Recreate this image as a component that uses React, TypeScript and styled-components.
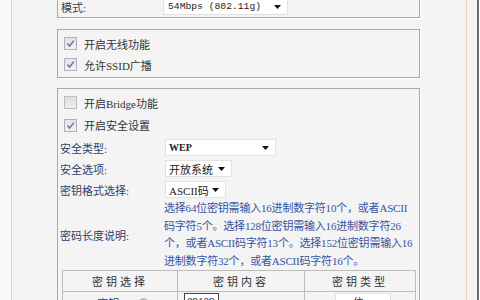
import { createGlobalStyle, styled } from 'styled-components';

const GlobalStyle = createGlobalStyle`
  html, body {
    margin: 0;
    padding: 0;
    background: #ffffff;
  }

  body {
    overflow: hidden;

    font-family: "Liberation Serif", "Noto Sans CJK SC", serif;
    font-size: 11px;
    color: #333333;
  }
`;

const DESC_LINES = [
  '选择64位密钥需输入16进制数字符10个，或者ASCII',
  '码字符5个。选择128位密钥需输入16进制数字符26',
  '个，或者ASCII码字符13个。选择152位密钥需输入16',
  '进制数字符32个，或者ASCII码字符16个。',
];

const Arrow = () => (
  <svg width="7" height="4" viewBox="0 0 7 4">
    <path d="M0 0 H7 L3.5 4 Z" fill="#111" />
  </svg>
);

const Select = ({ value, width, kind }: { value: string; width: number; kind?: 'mono' | 'bold' }) => (
  <S.Select $width={width} $kind={kind}>
    <span>{value}</span>
    <Arrow />
  </S.Select>
);

const Check = ({ checked, label }: { checked: boolean; label: string }) => (
  <S.CheckRow>
    <S.CheckBox $checked={checked}>
      {checked && (
        <svg width="11" height="11" viewBox="0 0 11 11">
          <path d="M2.4 5.6 L4.6 8 L8.8 2.6" fill="none" stroke="#6b7896" strokeWidth="1.5" />
        </svg>
      )}
    </S.CheckBox>
    <span>{label}</span>
  </S.CheckRow>
);

const WirelessSettings = () => {
  return (
    <S.Frame>
      <GlobalStyle />
      <S.Shell>
        <S.Panel>
          <S.Content>
            <S.Group $pad="9px 0 2px 3px">
              <S.Row $h={17}>
                <S.Label $w={102} $tone="#3b3f55">模式:</S.Label>
                <Select value="54Mbps (802.11g)" width={125} kind="mono" />
              </S.Row>
            </S.Group>

            <S.Group $pad="3px 0 2px 6px" $gap={11}>
              <Check checked label="开启无线功能" />
              <Check checked label="允许SSID广播" />
            </S.Group>

            <S.Group $pad="3px 0 0 2px" $gap={10} $open>
              <S.Indent>
                <Check checked={false} label="开启Bridge功能" />
              </S.Indent>
              <S.Indent $tall>
                <Check checked label="开启安全设置" />
              </S.Indent>
              <S.Row $h={21}>
                <S.Label $w={105}>安全类型:</S.Label>
                <Select value="WEP" width={111} kind="bold" />
              </S.Row>
              <S.Row $h={21}>
                <S.Label $w={105}>安全选项:</S.Label>
                <Select value="开放系统" width={67} />
              </S.Row>
              <S.Row $h={21}>
                <S.Label $w={105}>密钥格式选择:</S.Label>
                <Select value="ASCII码" width={61} />
              </S.Row>
              <S.DescRow>
                <S.Label $w={104}>密码长度说明:</S.Label>
                <S.Desc>
                  {DESC_LINES.map((line) => (
                    <div key={line}>{line}</div>
                  ))}
                </S.Desc>
              </S.DescRow>

              <S.KeyTable>
                <colgroup>
                  <col style={{ width: 115 }} />
                  <col style={{ width: 127 }} />
                  <col style={{ width: 111 }} />
                </colgroup>
                <thead>
                  <tr>
                    <S.Th>密钥选择</S.Th>
                    <S.Th>密钥内容</S.Th>
                    <S.Th>密钥类型</S.Th>
                  </tr>
                </thead>
                <tbody>
                  <tr>
                    <S.Td $align="center">
                      <S.KeyName>
                        密钥 1:
                        <S.Help>?</S.Help>
                      </S.KeyName>
                    </S.Td>
                    <S.Td $align="left">
                      <S.KeyInput>09109</S.KeyInput>
                    </S.Td>
                    <S.Td $align="center">
                      <Select value="64 位" width={56} />
                    </S.Td>
                  </tr>
                </tbody>
              </S.KeyTable>
            </S.Group>
          </S.Content>
        </S.Panel>
      </S.Shell>
    </S.Frame>
  );
};

const S = {
  Frame: styled.div`
    display: flex;
    overflow: hidden;

    width: 480px;
    height: 300px;

    background: #ffffff;
  `,

  Shell: styled.div`
    display: flex;
    box-sizing: border-box;

    width: 479px;
    height: 100%;
    padding: 0 10px 0 11px;
    border-right: 2px solid #6c6c6c;

    background: linear-gradient(to right, #fafafa 11px, #f4f4f4 11px);
  `,

  Panel: styled.div`
    box-sizing: border-box;
    overflow: hidden;

    width: 456px;
    height: 100%;
    border-left: 1px solid #e7d4bb;
    border-right: 1px solid #e7d4bb;

    background: #f4f4f4;
  `,

  Content: styled.div`
    display: flex;
    flex-direction: column;

    margin-top: -12px;
    padding-left: 45px;
  `,

  Group: styled.div<{ $pad: string; $gap?: number; $open?: boolean }>`
    display: flex;
    flex-direction: column;
    box-sizing: border-box;

    width: 363px;
    margin-top: ${({ $gap }) => $gap ?? 0}px;
    padding: ${({ $pad }) => $pad};
    border: 1px solid #a9a9a9;
    border-bottom: ${({ $open }) => ($open ? 'none' : '1px solid #a9a9a9')};

    box-shadow: 1px 1px 0 #ffffff;
  `,

  Row: styled.div<{ $h: number }>`
    display: flex;
    align-items: center;

    height: ${({ $h }) => $h}px;
  `,

  Label: styled.span<{ $w: number; $tone?: string }>`
    flex: none;

    width: ${({ $w }) => $w}px;

    color: ${({ $tone }) => $tone ?? '#2c3f6a'};
    white-space: nowrap;
  `,

  Select: styled.span<{ $width: number; $kind?: 'mono' | 'bold' }>`
    display: inline-flex;
    box-sizing: border-box;
    align-items: center;
    justify-content: space-between;

    width: ${({ $width }) => $width}px;
    height: 17px;
    padding: 0 6px 0 ${({ $kind }) => ($kind === 'mono' ? 4 : 3)}px;
    border: 1px solid #e2e2e2;

    background: #ffffff;
    color: #222222;
    font-family: ${({ $kind }) =>
      $kind === 'mono' ? '"Liberation Mono", monospace' : 'inherit'};
    font-size: ${({ $kind }) => ($kind === 'mono' ? '9.7px' : $kind === 'bold' ? '10px' : '11px')};
    font-weight: ${({ $kind }) => ($kind === 'bold' ? 700 : 400)};
    white-space: nowrap;
  `,

  CheckRow: styled.div`
    display: flex;
    align-items: center;

    height: 21px;

    color: #333333;
  `,

  Indent: styled.div<{ $tall?: boolean }>`
    display: flex;
    align-items: center;

    height: ${({ $tall }) => ($tall ? 24 : 21)}px;
    padding-left: 4px;
  `,

  CheckBox: styled.span<{ $checked: boolean }>`
    display: inline-flex;
    box-sizing: border-box;
    align-items: center;
    justify-content: center;

    width: 13px;
    height: 13px;
    margin-right: 7px;
    border: 1px solid ${({ $checked }) => ($checked ? '#aeb2c0' : '#bdbdbd')};

    background: ${({ $checked }) =>
      $checked ? 'linear-gradient(#e2e3e8, #f0f0f3)' : 'linear-gradient(#e0e0e0, #ededed)'};
  `,

  DescRow: styled.div`
    display: flex;
    align-items: center;

    height: 70px;
  `,

  Desc: styled.div`
    color: #3553a0;
    line-height: 17.5px;
    letter-spacing: -0.2px;
    white-space: nowrap;
  `,

  KeyTable: styled.table`
    width: 353px;
    margin-left: 2px;
    border-collapse: collapse;

    table-layout: fixed;
  `,

  Th: styled.th`
    height: 20px;
    padding: 0;
    border: 1px solid #bcbcbc;

    color: #333333;
    font-weight: 400;
    letter-spacing: 3px;
    text-align: center;
  `,

  Td: styled.td<{ $align: string }>`
    height: 24px;
    padding: 1px 0 0 6px;
    border: 1px solid #bcbcbc;

    text-align: ${({ $align }) => $align};
    vertical-align: top;
  `,

  KeyName: styled.span`
    display: inline-flex;
    align-items: center;
    gap: 7px;

    margin-top: 2px;

    color: #2c3f6a;
  `,

  Help: styled.span`
    display: inline-flex;
    align-items: center;
    justify-content: center;

    width: 11px;
    height: 11px;
    border-radius: 50%;

    background: #b9b9b9;
    color: #ffffff;
    font-size: 8px;
    font-weight: 700;
  `,

  KeyInput: styled.span`
    display: inline-block;
    box-sizing: border-box;

    width: 35px;
    height: 18px;
    padding: 1px 2px;
    border: 1px solid #444444;

    background: #ffffff;
    color: #111111;
    font-size: 11px;
  `,
};

export default WirelessSettings;
